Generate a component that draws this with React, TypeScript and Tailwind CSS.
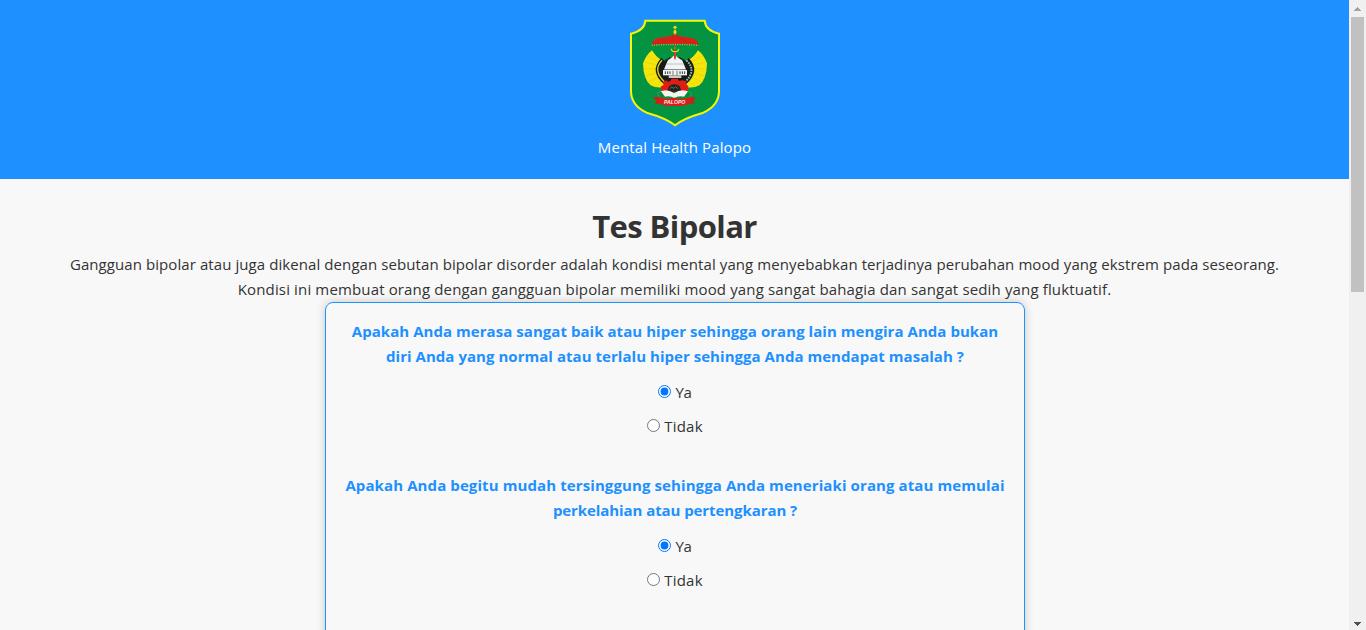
import React from "react";

function Emblem() {
  return (
    <svg width="92" height="108" viewBox="27 27 276 324" className="block shrink-0">
      <path
        d="M76 32H254Q256 62 297 71V243Q297 286 250 308Q190 325 165 346Q140 325 80 308Q33 286 33 243V71Q74 62 76 32Z"
        fill="#049441"
        stroke="#f4f800"
        strokeWidth="6"
      />
      <path d="M162 59H168V80H162Z" fill="#e0c21c" />
      <circle cx="165" cy="52" r="5" fill="#ead61b" />
      <circle cx="165" cy="66" r="5" fill="#ead61b" />
      <path d="M165 73Q152 80 112 85Q97 90 94 104Q129 99 165 103Q202 99 236 104Q233 90 218 85Q178 80 165 73Z" fill="#dc2018" />
      <path d="M163 80L125 101M164 80L147 102M166 80L184 102M167 80L207 101M163 80L105 100M167 80L225 100" stroke="#b02a16" strokeWidth="1.2" />
      <path d="M95 106Q165 101 236 106" stroke="#ddb321" strokeWidth="4" strokeDasharray="3 4" fill="none" />
      <ellipse cx="165" cy="184" rx="46" ry="44" fill="#151c19" />
      <path d="M96 121Q79 134 69 160Q70 208 92 226Q112 237 138 230L142 218Q112 204 112 176Q113 160 124 150Q108 141 96 121Z" fill="#f5e50a" />
      <path d="M234 121Q251 134 261 160Q260 208 238 226Q218 237 192 230L188 218Q218 204 218 176Q217 160 206 150Q222 141 234 121Z" fill="#f5e50a" />
      <path
        d="M112 153L84 138M109 164L74 157M108 176L72 177M110 188L75 199M116 201L84 216M125 211L104 230M218 153L246 138M221 164L256 157M222 176L258 177M220 188L255 199M214 201L246 216M205 211L226 230"
        stroke="#d6c710"
        strokeWidth="1.3"
      />
      <path d="M129 149Q96 182 136 217" stroke="#151c19" strokeWidth="14" fill="none" />
      <path d="M126 151Q97 181 133 215" stroke="#e1d21a" strokeWidth="4" fill="none" />
      <path d="M201 149Q234 182 194 217" stroke="#151c19" strokeWidth="14" fill="none" />
      <path d="M199 151Q231 181 197 214" stroke="#8cc0ac" strokeWidth="6" strokeDasharray="5 3" fill="none" />
      <path d="M143 148H187V178H143Z" fill="#049441" />
      <path d="M164 135L143 152L132 178H198L187 152Z" fill="#f4f4f6" />
      <path d="M139 162H191M133 179H197" stroke="#a6aaae" strokeWidth="2" />
      <path d="M129 180H201V196H129Z" fill="#f3f3f3" />
      <path d="M146 196H184V204H146Z" fill="#c7cccb" />
      <path d="M136 184V192M143 184V192M150 184V192M180 184V192M187 184V192M194 184V192" stroke="#353b3b" strokeWidth="3" />
      <path d="M159 182V196M171 182V196" stroke="#737979" strokeWidth="3" />
      <path d="M162 121H168V143L165 151L162 143Z" fill="#df3822" />
      <path d="M154 116Q154 125 165 125Q176 125 176 116" stroke="#e7d61a" strokeWidth="3.5" fill="none" />
      <circle cx="165" cy="114" r="3" fill="#d86a1a" />
      <path d="M128 216L139 211L143 215L151 213L155 206H173L177 213L187 211L199 214L199 223L205 229L202 246H126L122 230L131 224Z" fill="#df1d13" />
      <path d="M142 245Q144 223 163 223Q182 223 184 245Z" fill="#1f2421" />
      <path d="M149 236L155 231L161 235L167 230L174 236" stroke="#8a918c" strokeWidth="2" fill="none" />
      <path d="M112 250Q137 232 162 250Q188 232 215 250L206 266Q181 253 163 264Q144 253 121 266Z" fill="#f6f5ef" />
      <path d="M112 250L123 244L136 262L121 266Z" fill="#078b3e" />
      <path d="M215 250L204 244L191 262L206 266Z" fill="#078b3e" />
      <path d="M98 262L118 262L123 279L104 282L109 272ZM229 262L210 262L207 279L225 282L219 272Z" fill="#cf1d18" />
      <path d="M114 260Q139 271 163 263Q188 271 214 260L211 281Q187 290 164 287Q140 290 117 281Z" fill="#dd1b17" />
      <text x="164" y="281" textAnchor="middle" textLength="64" lengthAdjust="spacingAndGlyphs" fill="#fbe9e9" fontSize="15" fontWeight="700" fontStyle="italic" fontFamily="Liberation Sans, sans-serif">PALOPO</text>
    </svg>
  );
}

function Question({ name, children }: { name: string; children: React.ReactNode }) {
  return (
    <section className="flex h-[154px] flex-col items-center">
      <div className="flex flex-col items-center whitespace-nowrap text-[15px] leading-[25px] font-bold text-[#1e90ff]">
        {children}
      </div>
      <label className="mt-[11px] flex h-[25px] items-center gap-1 leading-[25px]">
        <input type="radio" name={name} defaultChecked className="m-0 -mt-0.5 size-[13px]" />
        <span className="tracking-[-0.3px]">Ya</span>
      </label>
      <label className="mt-[9px] flex h-[25px] items-center gap-1 leading-[25px]">
        <input type="radio" name={name} className="m-0 -mt-0.5 size-[13px]" />
        <span className="tracking-[0.2px]">Tidak</span>
      </label>
    </section>
  );
}

export default function App() {
  return (
    <div className="flex h-[630px] w-[1366px] overflow-hidden bg-[#f8f8f8] font-['Open_Sans','Noto_Sans',sans-serif] text-[15px] text-[#333]">
      <div className="flex w-[1349px] shrink-0 flex-col items-center">
        <header className="flex h-[179px] w-full shrink-0 flex-col items-center bg-[#1e90ff] pt-[19px] text-white">
          <Emblem />
          <p className="mt-2 text-[15px] leading-[25px] tracking-[0.12px]">Mental Health Palopo</p>
        </header>
        <h1 className="mt-[22px] text-[31px] leading-[51px] font-bold tracking-[-0.6px]">Tes Bipolar</h1>
        <div className="flex flex-col items-center whitespace-nowrap leading-[25px]">
          <p className="tracking-[0.08px]">Gangguan bipolar atau juga dikenal dengan sebutan bipolar disorder adalah kondisi mental yang menyebabkan terjadinya perubahan mood yang ekstrem pada seseorang.</p>
          <p className="tracking-[0.145px]">Kondisi ini membuat orang dengan gangguan bipolar memiliki mood yang sangat bahagia dan sangat sedih yang fluktuatif.</p>
        </div>
        <main className="ml-px h-[500px] w-[700px] shrink-0 rounded-lg border border-[#1e90ff] pt-4 shadow-[0_0_10px_rgba(0,0,0,0.2)]">
          <Question name="q1">
            <p className="tracking-[0.05px]">Apakah Anda merasa sangat baik atau hiper sehingga orang lain mengira Anda bukan</p>
            <p className="tracking-[0.04px]">diri Anda yang normal atau terlalu hiper sehingga Anda mendapat masalah ?</p>
          </Question>
          <Question name="q2">
            <p className="tracking-[0.1px]">Apakah Anda begitu mudah tersinggung sehingga Anda meneriaki orang atau memulai</p>
            <p className="tracking-[-0.08px]">perkelahian atau pertengkaran ?</p>
          </Question>
        </main>
      </div>
      <div className="flex w-[17px] shrink-0 flex-col items-center justify-between bg-[#f0f0f0]">
        <div className="flex flex-col items-center">
          <svg width="17" height="17" viewBox="0 0 17 17" shapeRendering="crispEdges"><path d="M8 7h1v1h1v1h1v1h1v1H5v-1h1V9h1V8h1z" fill="#a3a3a3" /></svg>
          <div className="h-[275px] w-[13px] bg-[#c1c1c1]" />
        </div>
        <svg width="17" height="17" viewBox="0 0 17 17" shapeRendering="crispEdges"><path d="M5 9h7v1h-1v1h-1v1H9v1H8v-1H7v-1H6v-1H5z" fill="#505050" /></svg>
      </div>
    </div>
  );
}
